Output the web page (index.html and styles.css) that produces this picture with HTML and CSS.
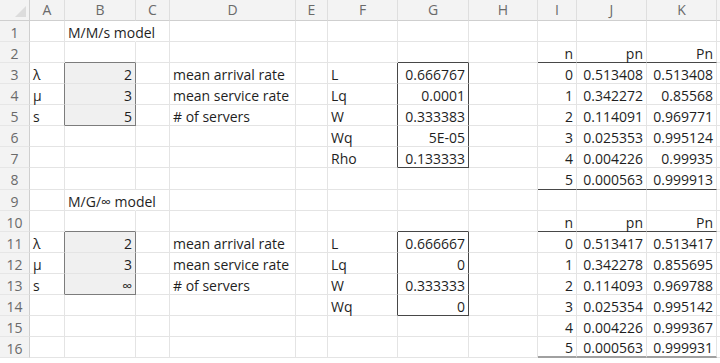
FILE: index.html
```html
<!DOCTYPE html>
<html lang="en">
<head>
<meta charset="utf-8">
<title>Queueing models</title>
<link rel="stylesheet" href="styles.css">
</head>
<body>
<div class="sheet">
  <!-- column headers -->
  <div class="c corner"><span class="tri"></span></div>
  <div class="c ch">A</div><div class="c ch">B</div><div class="c ch">C</div><div class="c ch">D</div><div class="c ch">E</div><div class="c ch">F</div><div class="c ch">G</div><div class="c ch">H</div><div class="c ch">I</div><div class="c ch">J</div><div class="c ch">K</div><div class="c ch"></div>

  <!-- row 1 -->
  <div class="c rh">1</div>
  <div class="c"></div><div class="c nr">M/M/s model</div><div class="c"></div><div class="c"></div><div class="c"></div><div class="c"></div><div class="c"></div><div class="c"></div><div class="c"></div><div class="c"></div><div class="c"></div><div class="c"></div>

  <!-- row 2 -->
  <div class="c rh">2</div>
  <div class="c"></div><div class="c bbg"></div><div class="c"></div><div class="c"></div><div class="c"></div><div class="c"></div><div class="c bb"></div><div class="c"></div><div class="c r bb">n</div><div class="c r bb">pn</div><div class="c r bb">Pn</div><div class="c"></div>

  <!-- row 3 -->
  <div class="c rh">3</div>
  <div class="c brg">λ</div><div class="c r brg fill">2</div><div class="c"></div><div class="c">mean arrival rate</div><div class="c"></div><div class="c br">L</div><div class="c r br">0.666767</div><div class="c"></div><div class="c r">0</div><div class="c r">0.513408</div><div class="c r">0.513408</div><div class="c"></div>

  <!-- row 4 -->
  <div class="c rh">4</div>
  <div class="c brg">μ</div><div class="c r brg fill">3</div><div class="c"></div><div class="c">mean service rate</div><div class="c"></div><div class="c br">Lq</div><div class="c r br">0.0001</div><div class="c"></div><div class="c r">1</div><div class="c r">0.342272</div><div class="c r">0.85568</div><div class="c"></div>

  <!-- row 5 -->
  <div class="c rh">5</div>
  <div class="c brg">s</div><div class="c r brg bbg fill">5</div><div class="c"></div><div class="c"># of servers</div><div class="c"></div><div class="c br">W</div><div class="c r br">0.333383</div><div class="c"></div><div class="c r">2</div><div class="c r">0.114091</div><div class="c r">0.969771</div><div class="c"></div>

  <!-- row 6 -->
  <div class="c rh">6</div>
  <div class="c"></div><div class="c"></div><div class="c"></div><div class="c"></div><div class="c"></div><div class="c br">Wq</div><div class="c r br">5E-05</div><div class="c"></div><div class="c r">3</div><div class="c r">0.025353</div><div class="c r">0.995124</div><div class="c"></div>

  <!-- row 7 -->
  <div class="c rh">7</div>
  <div class="c"></div><div class="c"></div><div class="c"></div><div class="c"></div><div class="c"></div><div class="c br">Rho</div><div class="c r br bb">0.133333</div><div class="c"></div><div class="c r">4</div><div class="c r">0.004226</div><div class="c r">0.99935</div><div class="c"></div>

  <!-- row 8 -->
  <div class="c rh">8</div>
  <div class="c"></div><div class="c"></div><div class="c"></div><div class="c"></div><div class="c"></div><div class="c"></div><div class="c"></div><div class="c"></div><div class="c r bb">5</div><div class="c r bb">0.000563</div><div class="c r bb">0.999913</div><div class="c"></div>

  <!-- row 9 -->
  <div class="c rh">9</div>
  <div class="c"></div><div class="c nr">M/G/∞ model</div><div class="c"></div><div class="c"></div><div class="c"></div><div class="c"></div><div class="c"></div><div class="c"></div><div class="c"></div><div class="c"></div><div class="c"></div><div class="c"></div>

  <!-- row 10 -->
  <div class="c rh">10</div>
  <div class="c"></div><div class="c bbg"></div><div class="c"></div><div class="c"></div><div class="c"></div><div class="c"></div><div class="c bb"></div><div class="c"></div><div class="c r bb">n</div><div class="c r bb">pn</div><div class="c r bb">Pn</div><div class="c"></div>

  <!-- row 11 -->
  <div class="c rh">11</div>
  <div class="c brg">λ</div><div class="c r brg fill">2</div><div class="c"></div><div class="c">mean arrival rate</div><div class="c"></div><div class="c br">L</div><div class="c r br">0.666667</div><div class="c"></div><div class="c r">0</div><div class="c r">0.513417</div><div class="c r">0.513417</div><div class="c"></div>

  <!-- row 12 -->
  <div class="c rh">12</div>
  <div class="c brg">μ</div><div class="c r brg fill">3</div><div class="c"></div><div class="c">mean service rate</div><div class="c"></div><div class="c br">Lq</div><div class="c r br">0</div><div class="c"></div><div class="c r">1</div><div class="c r">0.342278</div><div class="c r">0.855695</div><div class="c"></div>

  <!-- row 13 -->
  <div class="c rh">13</div>
  <div class="c brg">s</div><div class="c r brg bbg fill">∞</div><div class="c"></div><div class="c"># of servers</div><div class="c"></div><div class="c br">W</div><div class="c r br">0.333333</div><div class="c"></div><div class="c r">2</div><div class="c r">0.114093</div><div class="c r">0.969788</div><div class="c"></div>

  <!-- row 14 -->
  <div class="c rh">14</div>
  <div class="c"></div><div class="c"></div><div class="c"></div><div class="c"></div><div class="c"></div><div class="c br">Wq</div><div class="c r br bb">0</div><div class="c"></div><div class="c r">3</div><div class="c r">0.025354</div><div class="c r">0.995142</div><div class="c"></div>

  <!-- row 15 -->
  <div class="c rh">15</div>
  <div class="c"></div><div class="c"></div><div class="c"></div><div class="c"></div><div class="c"></div><div class="c"></div><div class="c"></div><div class="c"></div><div class="c r">4</div><div class="c r">0.004226</div><div class="c r">0.999367</div><div class="c"></div>

  <!-- row 16 -->
  <div class="c rh">16</div>
  <div class="c"></div><div class="c"></div><div class="c"></div><div class="c"></div><div class="c"></div><div class="c"></div><div class="c"></div><div class="c"></div><div class="c r bbl">5</div><div class="c r bbl">0.000563</div><div class="c r bbl">0.999931</div><div class="c"></div>
</div>
</body>
</html>
```
FILE: styles.css
```css
html, body {
  margin: 0;
  padding: 0;
  background: #ffffff;
  overflow: hidden;
}

body {
  font-family: "Open Sans", "DejaVu Sans", sans-serif;
  font-size: 14px;
  color: #1f1f1f;
}

.sheet {
  display: grid;
  width: 720px;
  grid-template-columns: 30px 35px 71px 34px 126px 32px 70px 71px 69px 39px 70px 70px 1fr;
  grid-template-rows: 21px repeat(16, 21.07px) 1fr;
}

.c {
  box-sizing: border-box;
  display: flex;
  align-items: center;
  padding: 4px 3px 0 3px;
  white-space: nowrap;
  min-width: 0;
  border-right: 1px solid #e4e4e4;
  border-bottom: 1px solid #e4e4e4;
  line-height: 1;
}

.r {
  justify-content: flex-end;
}

.nr {
  border-right-color: transparent;
}

.bb {
  border-bottom-color: #474747;
}

.br {
  border-right-color: #474747;
}

.bbg {
  border-bottom-color: #7c7c7c;
}

.brg {
  border-right-color: #7c7c7c;
}

.bbl {
  border-bottom: 2px solid #a0a0a0;
}

.fill {
  background: #f0f0f0;
}

.ch {
  background: #f3f3f3;
  color: #6a6a6a;
  justify-content: center;
  padding: 0;
  border-bottom-color: #cfcfcf;
  border-right-color: #dedede;
}

.rh {
  background: #f3f3f3;
  color: #6a6a6a;
  justify-content: center;
  padding: 4px 0 0 0;
  border-right-color: #cfcfcf;
  border-bottom-color: #e6e6e6;
}

.corner {
  background: #f3f3f3;
  justify-content: flex-end;
  align-items: flex-end;
  padding: 0 3px 3px 0;
  border-bottom-color: #cfcfcf;
  border-right-color: #cfcfcf;
}

.tri {
  display: block;
  width: 11px;
  height: 11px;
  background: #dcdcdc;
  clip-path: polygon(100% 0, 100% 100%, 0 100%);
}
```
